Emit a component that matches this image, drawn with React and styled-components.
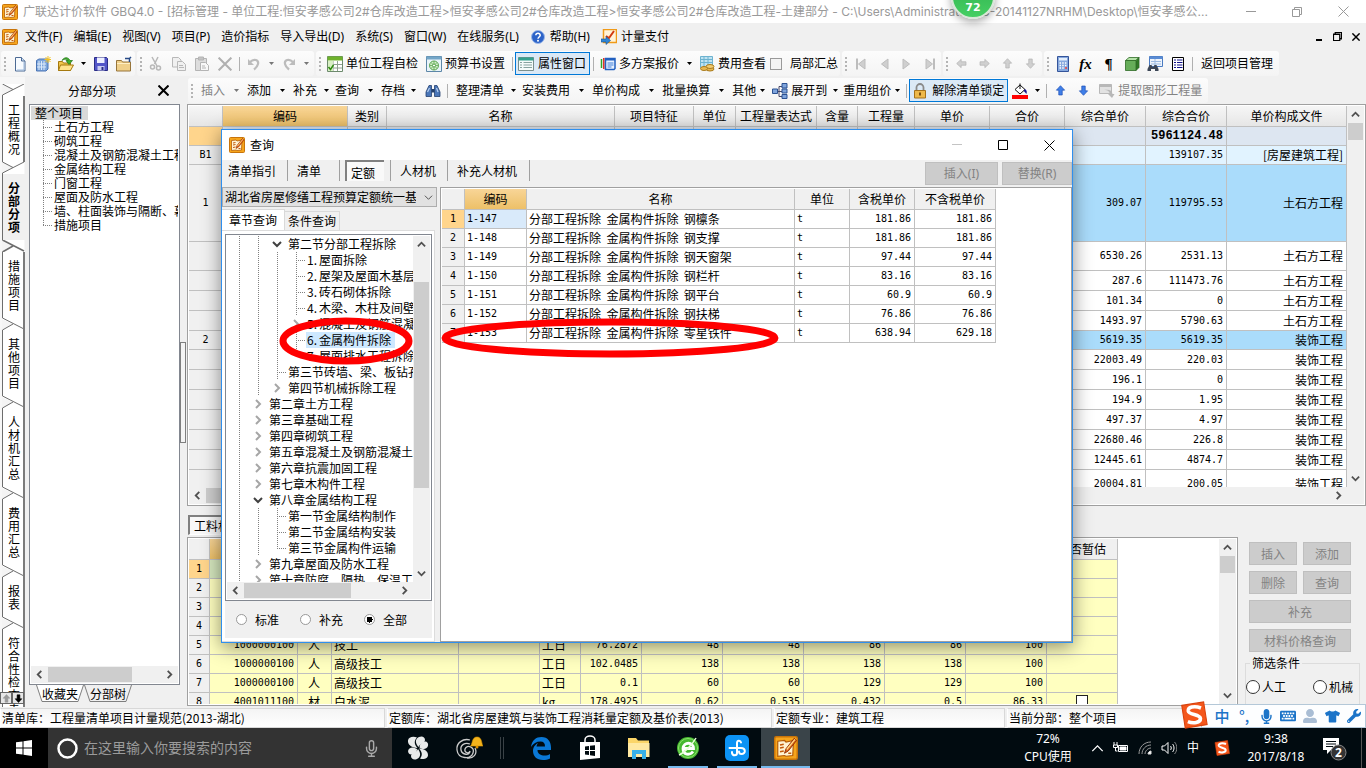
import styled, { createGlobalStyle, css } from "styled-components";
import { FaMicrophone, FaTshirt, FaWrench, FaKeyboard, FaUserAlt } from "react-icons/fa";
import { FiMic } from "react-icons/fi";

const UI = '"Noto Sans", "Noto Sans CJK SC", sans-serif';
const SONG = '"Noto Sans CJK SC", sans-serif';
const MONO = '"DejaVu Sans Mono", "Noto Sans CJK SC", monospace';

const GlobalStyle = createGlobalStyle`
  * { box-sizing: border-box; }
  body {
    margin: 0;
    background: #f0f0f0;
    font: 12px/16px ${SONG};
    color: #000;
    overflow: hidden;
  }
  button, input, select { font: inherit; color: inherit; margin: 0; padding: 0; }
  ul { list-style: none; margin: 0; padding: 0; }
`;

const Screen = styled.div`
  position: relative;
  display: flex;
  flex-direction: column;
  height: 100vh;
  background: #f0f0f0;
  white-space: nowrap;
  overflow: hidden;
`;

/* ---------- title and menu ---------- */

const TitleBar = styled.header`
  display: flex;
  align-items: center;
  flex: none;
  height: 23px;
  padding-left: 2px;
  background: #fff;
  color: #999;
  font-family: Inter, ${UI};
`;

const TitleText = styled.span`
  flex: 1;
  min-width: 0;
  padding-left: 5px;
  overflow: hidden;
`;

const WindowButtons = styled.div`
  display: flex;
  flex: none;
`;

const WindowButton = styled.button`
  display: flex;
  align-items: center;
  justify-content: center;
  width: ${(p) => p.$w || 46}px;
  height: 22px;
  border: none;
  background: none;
`;

const MenuBar = styled.nav`
  display: flex;
  align-items: center;
  flex: none;
  height: 27px;
  padding-left: 2px;
  font-family: ${UI};
`;

const MenuItem = styled.button`
  display: flex;
  align-items: center;
  gap: 4px;
  padding: 0 4px 0 7px;
  border: none;
  background: none;
`;

const Grow = styled.span`
  flex: 1;
`;

/* ---------- tool bars ---------- */

const ToolBar = styled.div`
  display: flex;
  align-items: center;
  flex: none;
  gap: 2px;
  height: 27px;
  padding-left: 1px;
  font-family: ${UI};
`;

const ToolGroup = styled.div`
  display: flex;
  align-items: center;
  flex: none;
  height: 25px;
  padding-right: ${(p) => (p.$end ? 2 : 0)}px;
  border-radius: 3px;
  background: linear-gradient(#fcfcfc, #f4f4f4);
`;

const Grip = styled.span`
  width: 2px;
  height: 14px;
  margin: 0 2px 0 3px;
  background: repeating-linear-gradient(#b4b4b4 0 2px, transparent 2px 4px);
`;

const IconTool = styled.button`
  display: flex;
  align-items: center;
  justify-content: center;
  width: ${(p) => p.$w || 23}px;
  height: 22px;
  border: none;
  background: none;
`;

const Separator = styled.span`
  width: 1px;
  height: 14px;
  margin: 0 2px 0 3px;
  background: #b0b0b0;
`;

const Spacer = styled.span`
  width: 6px;
`;

const TextTool = styled.button`
  border: none;
  background: none;
  padding-right: ${(p) => (p.$flush ? 0 : 4)}px;
  color: ${(p) => (p.$off ? "#838383" : "#000")};
`;

const BoxedTool = styled.button`
  display: flex;
  align-items: center;
  gap: 4px;
  height: 23px;
  padding: 0 3px 0 2px;
  border: 1px solid #0078d7;
  background: #dbe9f6;
`;

const CheckTool = styled.label`
  display: flex;
  align-items: center;
  gap: 8px;
`;

const SquareCheck = styled.input`
  appearance: none;
  width: 12px;
  height: 12px;
  border: 1px solid ${(p) => (p.$dark ? "#222" : "#9a9a9a")};
  background: ${(p) => (p.$dark ? "#fff" : "#f4f4f4")};
`;

const FxText = styled.span`
  font: italic 700 15px/16px "Liberation Serif", serif;
`;

const Pilcrow = styled.span`
  font: 700 15px/16px "Liberation Serif", serif;
`;

/* ---------- body ---------- */

const Body = styled.div`
  display: flex;
  flex: 1;
  min-height: 0;
`;

const SideTabs = styled.div`
  position: relative;
  display: flex;
  flex-direction: column;
  flex: none;
  width: 25px;
  padding-top: 7px;
  background: #f7f7f7;
  overflow: hidden;
`;

const SideTab = styled.button`
  display: block;
  flex: none;
  padding: 7px 4px 7px 5px;
  margin-left: 2px;
  border: solid #6d6d6d;
  border-width: 0 2px 0 1px;
  border-right-color: ${(p) => (p.$active ? "#f0f0f0" : "#7b7b7b")};
  background: ${(p) => (p.$active ? "#f0f0f0" : "#fff")};
  font-weight: ${(p) => (p.$active ? 700 : 400)};
  line-height: 13px;
  white-space: normal;
  word-break: break-all;
`;

const SideLabel = styled.span`
  display: block;
  width: 12px;
`;

const NotchSvg = styled.svg`
  flex: none;
`;

const SideArrows = styled.div`
  position: absolute;
  left: 0;
  bottom: 3px;
  display: flex;
`;

const SideArrow = styled.button`
  display: flex;
  align-items: center;
  justify-content: center;
  width: 12px;
  height: 12px;
  border: 1px solid #666;
  background: #e6e6e6;
`;

const LeftPanel = styled.aside`
  display: flex;
  flex-direction: column;
  flex: none;
  width: 155px;
  padding-left: 4px;
`;

const LeftHeader = styled.div`
  display: flex;
  align-items: center;
  flex: none;
  height: 27px;
  padding-left: 39px;
  justify-content: space-between;
`;

const TreeBox = styled.div`
  display: flex;
  flex-direction: column;
  flex: 1;
  min-height: 0;
  border: 1px solid #828790;
  padding: 1px;
  background: #fff;
`;

const TreeList = styled.ul`
  flex: 1;
  min-width: 0;
  min-height: 0;
  overflow: hidden;
  padding-left: ${(p) => p.$indent || 0}px;
`;

const TreeRow = styled.li`
  display: flex;
  align-items: center;
  height: ${(p) => p.$h}px;
  line-height: ${(p) => p.$h}px;
`;

const TreeRoot = styled.span`
  padding: 0 5px 0 4px;
  background: #d9d9d9;
`;

const TreeText = styled.span`
  padding: 0 4px 0 1px;
  background: ${(p) => (p.$selected ? "#cde8ff" : "none")};
`;

const TreeNo = styled.span`
  display: inline-block;
  width: 12px;
`;

const dotsDown = "repeating-linear-gradient(#808080 0 1px, transparent 1px 2px)";
const dotsAcross = "repeating-linear-gradient(90deg, #808080 0 1px, transparent 1px 2px)";

const Guide = styled.span`
  flex: none;
  width: 19px;
  height: 100%;
  background: ${dotsDown} 0 0 / 1px 100% no-repeat;
`;

const Elbow = styled.span`
  flex: none;
  width: 10px;
  height: 100%;
  margin-left: ${(p) => p.$offset || 0}px;
  background:
    ${dotsDown} 0 0 / 1px ${(p) => (p.$last ? "50%" : "100%")} no-repeat,
    ${dotsAcross} 0 50% / 9px 1px no-repeat;
`;

const Expander = styled.span`
  display: flex;
  flex: none;
  width: 15px;
  margin-left: -5px;
`;

const BottomTabs = styled.div`
  display: flex;
  flex: none;
  height: 22px;
  padding-left: 7px;
`;

const BottomTabButton = styled.button`
  display: grid;
  width: 48px;
  height: 17px;
  border: none;
  background: none;
  line-height: 17px;

  > * { grid-area: 1 / 1; }
`;

const Splitter = styled.div`
  display: flex;
  flex: none;
  align-items: center;
  width: 7px;
`;

const SplitHandle = styled.span`
  width: 6px;
  height: 101px;
  border: 1px solid #7f7f7f;
  background: #f4f4f4;
`;

const Main = styled.main`
  display: flex;
  flex-direction: column;
  flex: 1;
  min-width: 0;
`;

const GridBox = styled.section`
  display: flex;
  flex: ${(p) => (p.$fill ? 1 : "none")};
  flex-direction: ${(p) => (p.$column ? "column" : "row")};
  min-height: 0;
  min-width: 0;
  border: 1px solid #a0a0a0;
  padding: 1px;
  background: #fff;
`;

const GridRow = styled.div`
  display: flex;
  flex: 1;
  min-height: 0;
`;

const GridView = styled.div`
  flex: 1;
  min-width: 0;
  overflow: hidden;
`;

const Table = styled.table`
  table-layout: fixed;
  width: ${(p) => p.$width || "100%"};
  border-spacing: 0;
  border-collapse: separate;
  line-height: 14px;
`;

const line = css`
  border: solid #c0c0c0;
  border-width: 0 1px 1px 0;
`;

const Th = styled.th`
  ${line}
  height: 21px;
  padding: 0;
  font-weight: 400;
  overflow: hidden;
  background: ${(p) =>
    p.$hot
      ? "linear-gradient(#f8d597, #edc068)"
      : p.$shade
      ? "linear-gradient(#f6f6f6, #e6e6e6)"
      : "#f0f0f0"};
`;

const RowHead = styled.th`
  ${line}
  padding: 0;
  font: 10px/14px ${MONO};
  background: ${(p) => (p.$hot ? "#ffd58c" : "#f0f0f0")};
`;

const Td = styled.td`
  ${line}
  height: ${(p) => p.$h || 19}px;
  padding: 0 3px 0 2px;
  overflow: hidden;
  text-align: ${(p) => p.$align || "left"};
  background: ${(p) => p.$bg || "#fff"};
  ${(p) => p.$num && `font: 10px/14px ${MONO};`}
  ${(p) => p.$strong && `font: 700 12px/14px "Liberation Mono", monospace;`}
`;

const VScroll = styled.div`
  display: flex;
  flex-direction: column;
  align-items: center;
  flex: none;
  width: 17px;
  background: #f0f0f0;
`;

const HScroll = styled.div`
  display: flex;
  align-items: center;
  flex: none;
  height: 17px;
  padding-right: ${(p) => p.$corner || 0}px;
  background: #f0f0f0;
`;

const ScrollEnd = styled.button`
  display: flex;
  align-items: center;
  justify-content: center;
  width: 17px;
  height: 17px;
  border: none;
  background: none;
`;

const Thumb = styled.span`
  width: ${(p) => (p.$across ? `${p.$size}px` : "15px")};
  height: ${(p) => (p.$across ? "15px" : `${p.$size}px`)};
  margin-top: ${(p) => p.$offset || 0}px;
  background: #cdcdcd;
`;

const DetailTabs = styled.div`
  flex: none;
  height: 31px;
  padding: 9px 1px 0;
`;

const SunkenTab = styled.button`
  height: 20px;
  padding: 0 6px 0 4px;
  border: solid #808080;
  border-width: 2px 1px 1px 2px;
  border-right-color: #fff;
  border-bottom-color: #fff;
  background: #f8f8f8;
  line-height: 16px;
`;

const Lower = styled.div`
  display: flex;
  flex: none;
  height: 170px;
  padding-bottom: 1px;
`;

const ActionPanel = styled.div`
  flex: none;
  width: 128px;
  padding: 5px 6px 0 7px;
  overflow: hidden;
`;

const ActionGrid = styled.div`
  display: grid;
  grid-template-columns: 48px 48px;
  gap: 6px;
  padding-left: 4px;
`;

const FlatButton = styled.button`
  height: 23px;
  width: ${(p) => p.$w || "auto"};
  grid-column: ${(p) => (p.$wide ? "1 / 3" : "auto")};
  border: 1px solid #bfbfbf;
  background: #ccc;
  color: #838383;
  line-height: 16px;
`;

const FilterBox = styled.fieldset`
  margin: 3px 0 0;
  padding: 0;
  min-width: 0;
  height: 70px;
  border: 1px solid #dcdcdc;
`;

const FilterLegend = styled.legend`
  margin-left: 4px;
  padding: 0 2px;
`;

const FilterRow = styled.div`
  display: flex;
  justify-content: space-between;
  height: 20px;
  padding: 0 6px 0 0;
  margin: 6px 0 4px;
`;

const RadioLabel = styled.label`
  display: flex;
  align-items: center;
  gap: ${(p) => p.$gap || 2}px;
`;

const Radio = styled.input`
  appearance: none;
  width: ${(p) => p.$size}px;
  height: ${(p) => p.$size}px;
  border: 1px solid ${(p) => (p.$size > 12 ? "#333" : "#999")};
  border-radius: 50%;
  background: #fff;

  &:checked {
    background: radial-gradient(circle, #000 0 3px, #fff 3px);
  }
`;

/* ---------- status bar and task bar ---------- */

const StatusBar = styled.footer`
  display: grid;
  grid-template-columns: 385px 385px 231px 1fr;
  gap: 2px;
  flex: none;
  height: 21px;
  padding: 1px 0;
  background: #f0f0f0;
`;

const StatusCell = styled.span`
  padding-left: 1px;
  border: 1px solid #d8d8d8;
  border-left-color: #fff;
  background: linear-gradient(#f4f4f4, #fff);
  line-height: 18px;
`;

const TaskBar = styled.div`
  display: flex;
  flex: none;
  height: 40px;
  background: #010b10;
  color: #fff;
  font-family: ${UI};
`;

const StartButton = styled.button`
  display: flex;
  align-items: center;
  justify-content: center;
  width: 48px;
  border: none;
  background: #000;
`;

const SearchBox = styled.label`
  display: flex;
  align-items: center;
  width: 344px;
  padding: 0 12px 0 8px;
  gap: 5px;
  background: #333;
`;

const SearchInput = styled.input`
  flex: 1;
  min-width: 0;
  border: none;
  background: none;
  font-size: 14px;

  &::placeholder { color: #9b9b9b; }
`;

const TaskButton = styled.button`
  display: flex;
  align-items: center;
  justify-content: center;
  width: ${(p) => p.$w || 49}px;
  border: none;
  background: ${(p) => (p.$active ? "#3a4449" : "none")};
  ${(p) =>
    p.$open &&
    `background-image: linear-gradient(#76b9ed, #76b9ed);
     background-size: ${p.$active ? "100%" : "40px"} 2px;
     background-position: center bottom;
     background-repeat: no-repeat;`}
`;

const TaskDivider = styled.span`
  align-self: center;
  width: 4px;
  height: 22px;
  margin: 0 12px 0 6px;
  border: solid #3a4246;
  border-width: 0 1px;
`;

const Clock = styled.div`
  width: 74px;
  padding-top: 2px;
  line-height: 18px;
  text-align: center;
`;

const TaskEdge = styled.span`
  width: 11px;
  background: linear-gradient(#555, #555) 6px 0 / 1px 100% no-repeat;
`;

const ImeBar = styled.div`
  position: absolute;
  right: 0;
  bottom: 40px;
  display: flex;
  align-items: center;
  height: 24px;
  padding-left: 9px;
  border: 1px solid #b4c8d8;
  background: #fdfeff;
  color: #1c74c8;
`;

const ImeLogo = styled.span`
  position: absolute;
  left: -22px;
  top: -4px;
  display: flex;
`;

const ImeButton = styled.button`
  display: flex;
  align-items: center;
  justify-content: center;
  width: 22px;
  border: none;
  background: none;
  font-size: 15px;
  font-weight: 500;
  color: ${(p) => (p.$pale ? "#a9bdd4" : "#1c74c8")};
`;

const SpeedBall = styled.div`
  position: absolute;
  top: -25px;
  left: 951px;
  width: 44px;
  height: 44px;
  padding-top: 23px;
  border: 2px solid #d8e6d8;
  border-radius: 50%;
  background: linear-gradient(#2fae4b, #45cf63);
  box-shadow: 0 3px 8px rgba(0, 0, 0, 0.35);
  color: #fff;
  font: 700 11px/16px "DejaVu Sans", sans-serif;
  text-align: center;
`;

/* ---------- query dialog ---------- */

const Dialog = styled.section`
  position: absolute;
  left: 221px;
  top: 129px;
  display: flex;
  flex-direction: column;
  width: 852px;
  height: 514px;
  border: 1px solid #2f8fee;
  background: #f0f0f0;
  box-shadow: 0 4px 18px rgba(0, 0, 0, 0.45);
`;

const DialogTitle = styled.div`
  display: flex;
  align-items: center;
  gap: 5px;
  flex: none;
  height: 30px;
  padding-left: 7px;
  background: #fff;
`;

const DialogTabs = styled.div`
  display: flex;
  align-items: center;
  flex: none;
  height: 27px;
`;

const DialogTab = styled.button`
  width: ${(p) => p.$w}px;
  height: 21px;
  margin-bottom: 6px;
  padding: 0 0 0 ${(p) => (p.$first ? 6 : 9)}px;
  border: solid #a0a0a0;
  border-width: 0 1px 0 ${(p) => (p.$edge ? 1 : 0)}px;
  background: none;
  line-height: 16px;
  text-align: left;
`;

const ActiveDialogTab = styled.button`
  height: 21px;
  margin: 0 6px 6px 5px;
  padding: 2px 9px 0 4px;
  border: solid #808080;
  border-width: 2px 0 0 2px;
  background: #f9f9f9;
  line-height: 16px;
`;

const DialogActions = styled.div`
  display: flex;
  gap: 4px;
  margin-left: auto;
  font-family: ${UI};
`;

const DialogBody = styled.div`
  display: flex;
  flex: 1;
  min-height: 0;
`;

const QueryPane = styled.div`
  display: flex;
  flex-direction: column;
  flex: none;
  width: 218px;
`;

const ComboWrap = styled.div`
  display: grid;
  align-items: center;
  flex: none;
  width: 215px;
  height: 20px;

  > * { grid-area: 1 / 1; }
  > svg { justify-self: end; margin-right: 4px; pointer-events: none; }
`;

const Combo = styled.select`
  appearance: none;
  width: 100%;
  height: 20px;
  padding: 0 20px 0 2px;
  border: 1px solid #adadad;
  border-radius: 0;
  background: #e1e1e1;
  line-height: 16px;
`;

const PageTabs = styled.div`
  display: flex;
  align-items: flex-end;
  flex: none;
  height: 23px;
`;

const PageTab = styled.button`
  height: ${(p) => (p.$active ? 21 : 19)}px;
  padding: 0 ${(p) => (p.$active ? 7 : 3)}px;
  border: solid #d9d9d9;
  border-width: 1px 1px 0 0;
  background: ${(p) => (p.$active ? "#fff" : "#f0f0f0")};
  line-height: 16px;
`;

const Page = styled.div`
  display: flex;
  flex-direction: column;
  flex: 1;
  min-height: 0;
  width: 213px;
  padding: 3px 2px 3px 3px;
  border: solid #dcdcdc;
  border-width: 1px 1px 1px 0;
  background: #fff;
`;

const RadioStrip = styled.div`
  display: flex;
  align-items: center;
  flex: none;
  height: 37px;
  padding-left: 11px;
  gap: 21px;
  background: #f0f0f0;
`;

const Mark = styled.svg`
  position: absolute;
  left: ${(p) => p.$x}px;
  top: ${(p) => p.$y}px;
  pointer-events: none;
`;

/* ---------- drawings ---------- */

const Svg = ({ size = 16, children, ...rest }) => (
  <svg width={size} height={size} viewBox="0 0 16 16" fill="none" {...rest}>
    {children}
  </svg>
);

const AppIcon = ({ size = 16 }) => (
  <Svg size={size}>
    <rect x=".5" y=".5" width="15" height="15" rx="1" fill="#f6a51c" stroke="#c8740a" />
    <path d="M2.500 3.500 7 3l1 1 5-1-.5 10-4.500.5-1-.5-4.500.5Z" fill="#fff3d2" stroke="#b45c08" strokeWidth=".8" />
    <path d="M4 6 6.500 5.500M4 8l2.500-.5M4 10.500 6.500 10M9.500 11.500h2" stroke="#c4590a" />
    <path d="M13.500 1.500 8 8.500l-1 3 2.500-1.500L15 3Z" fill="#e0641a" stroke="#8e2c05" strokeWidth=".6" />
    <path d="M8.500 9 14 2.200" stroke="#ffe08a" strokeWidth=".8" />
  </Svg>
);

const Triangle = ({ color = "#000" }) => (
  <svg width="5" height="3" viewBox="0 0 5 3">
    <path d="M0 0h5L2.500 3Z" fill={color} />
  </svg>
);

const turns = { down: 0, left: 90, up: 180, right: 270 };
const Chevron = ({ dir, size = 9, color = "#505050", width = 2 }) => (
  <svg width={size} height={size} viewBox="0 0 10 10" fill="none">
    <path d="M1 3l4 4 4-4" stroke={color} strokeWidth={width} transform={`rotate(${turns[dir]} 5 5)`} />
  </svg>
);

const CloseX = ({ size = 11, color = "#000", width = 1 }) => (
  <svg width={size} height={size} viewBox="0 0 11 11">
    <path d="M.5.5l10 10M10.500.5l-10 10" stroke={color} strokeWidth={width} />
  </svg>
);

const Dash = ({ color }) => (
  <svg width="10" height="10" viewBox="0 0 10 10">
    <path d="M0 4.500h10" stroke={color} />
  </svg>
);

const Restore = ({ color, width = 1, size = 10 }) => (
  <svg width={size} height={size} viewBox="0 0 10 10" fill="none" stroke={color} strokeWidth={width}>
    <path d="M.5 2.500h7v7h-7Z M2.500 2.500v-2h7v7h-2" />
  </svg>
);

const Arrow4 = ({ dir, fill = "#d0d0d0", stroke = "#b0b0b0", size = 11 }) => (
  <Svg size={size}>
    <path
      d="M8 15 2 8.500h3.500V1.500h5v7H14Z"
      fill={fill}
      stroke={stroke}
      transform={`rotate(${turns[dir]} 8 8)`}
    />
  </Svg>
);

const NavIcon = ({ back, bar }) => (
  <Svg>
    <g transform={back ? "" : "rotate(180 8 8)"}>
      <path d="M12 3v10L5.500 8Z" fill="#cfcfcf" stroke="#bdbdbd" />
      {bar && <path d="M4 2.500v11" stroke="#bdbdbd" strokeWidth="2" />}
    </g>
  </Svg>
);

const NewIcon = () => (
  <Svg>
    <path d="M3.500 1.500h6l3.500 3.500v10h-9.500Z" fill="#f7fbff" stroke="#4c6a94" />
    <path d="M9.500 1.500V5H13" fill="#cfe0f4" stroke="#4c6a94" />
    <path d="M12 6v8H5" stroke="#9cb9dc" />
  </Svg>
);

const NewProjectIcon = () => (
  <Svg>
    <path d="M1.500 4.500 4 3h9v10l-2 2H1.500Z" fill="#7ea6dc" stroke="#4a74b4" />
    <path d="M4 5v9M6.500 5v9M9 5v9M2 8h9M2 11h9" stroke="#dceafa" />
    <path d="M13 0v7M9.500 3.500h7M10.500 1l5 5M15.500 1l-5 5" stroke="#f2c122" />
  </Svg>
);

const OpenIcon = () => (
  <Svg>
    <path d="M.5 5.500h4l1 1.500h7v7.500H.5Z" fill="#f1c64a" stroke="#a5790f" />
    <path d="M2.500 9h13l-3 5.500H.5Z" fill="#ffe38b" stroke="#a5790f" />
    <path d="M4 4.500C6 1 10 .5 12 4.500h2.500L11 8.500 8 4.500h2C8.500 2.500 6 3 4 4.500Z" fill="#3fae2a" stroke="#1d7413" strokeWidth=".7" />
  </Svg>
);

const SaveIcon = () => (
  <Svg>
    <path d="M1.500 1.500h12l1 1v12h-13Z" fill="#5356c8" stroke="#2a2c86" />
    <path d="M4 1.500h7.500V7H4Z" fill="#eef0ff" />
    <path d="M4.500 10h7v4.500h-7Z" fill="#c9ccf2" />
    <path d="M8.500 11h2v3h-2Z" fill="#2a2c86" />
  </Svg>
);

const FolderIcon = () => (
  <Svg>
    <path d="M.5 4.500h5l1 1.500h8v9H.5Z" fill="#f0d08a" stroke="#97753a" />
    <path d="M1 7.500h13" stroke="#fff0c4" />
    <path d="M9 2.500h4.500V6M13.500 2.500 15 1" stroke="#274a86" strokeWidth="1.500" />
  </Svg>
);

const CutIcon = () => (
  <Svg stroke="#b8b8b8" strokeWidth="1.500">
    <path d="M4 1l5 9M10 1 6.500 8" />
    <circle cx="10.500" cy="12" r="2" />
    <circle cx="4.500" cy="11" r="2" />
  </Svg>
);

const CopyIcon = () => (
  <Svg stroke="#b8b8b8" fill="#f0f0f0">
    <path d="M1.500 1.500h6l2.500 2.500v7H1.500Z" />
    <path d="M6.500 5.500h5l3 3v6h-8Z" />
    <path d="M8 9.500h4M8 11.500h5" />
  </Svg>
);

const PasteIcon = () => (
  <Svg stroke="#b4b4b4" fill="#ddd">
    <path d="M1.500 2.500h11v12h-11Z" />
    <path d="M4.500 1h5v3h-5Z" fill="#c4c4c4" />
    <path d="M6.500 6.500h5l3 3v5h-8Z" fill="#f8f8f8" />
    <path d="M8 10h3M8 12h4" />
  </Svg>
);

const UndoIcon = ({ flip }) => (
  <Svg>
    <g transform={flip ? "translate(16 0) scale(-1 1)" : ""}>
      <path d="M4 6c4-4 9-2 8 2-.5 2.500-2 4-4 5.500" stroke="#bcbcbc" strokeWidth="2.200" />
      <path d="M2 3v6h6Z" fill="#bcbcbc" />
    </g>
  </Svg>
);

const CheckTableIcon = () => (
  <Svg>
    <path d="M.5.5h15v15H.5Z" fill="#fff" stroke="#6d8a6d" />
    <path d="M.5.5h15v4H.5Z" fill="#6fb22c" />
    <path d="M1 8.500h14M1 12h14M6 5v10M10.500 5v10" stroke="#90a090" />
    <path d="M1 5h5v10H1Z" fill="#d8efc4" />
    <path d="M1.500 11l2 2.500L6.500 9" stroke="#2f8a10" strokeWidth="1.500" />
  </Svg>
);

const GearPageIcon = () => (
  <Svg>
    <path d="M.5.5h15v15H.5Z" fill="#e9f4f9" stroke="#5d87a8" />
    <path d="M.5.5h15v3H.5Z" fill="#74a6c8" />
    <circle cx="8" cy="9.500" r="4.500" fill="#d2efc9" stroke="#5aa551" />
    <path d="M8 5v9M3.500 9.500h9M5 6.500l6 6M11 6.500l-6 6" stroke="#5aa551" strokeWidth=".8" />
    <circle cx="8" cy="9.500" r="1.500" fill="#fff" stroke="#5aa551" />
  </Svg>
);

const WindowIcon = () => (
  <Svg>
    <path d="M.5 1.500h15v13H.5Z" fill="#f4fbfa" stroke="#7b8f8d" />
    <path d="M.5 1.500h15v3H.5Z" fill="#35a18f" />
    <path d="M2 6.500h2M2 9h2M2 11.500h2M5.500 6.500h8.500M5.500 9h8.500M5.500 11.500h8.500" stroke="#87a3a0" />
  </Svg>
);

const PlansIcon = () => (
  <Svg>
    <path d="M1.500 3v9" stroke="#2ea32a" strokeWidth="1.500" />
    <path d="M3.800 2v11" stroke="#e02a1e" strokeWidth="1.500" />
    <path d="M5.500 2.500h9.500v10l-1 1H5.500Z" fill="#e8f2ff" stroke="#2260c0" strokeWidth="1.500" />
    <path d="M5.500 3.500h9.500" stroke="#2260c0" strokeWidth="2" />
    <path d="M7.500 7h6M7.500 9h6M7.500 11h4" stroke="#3f7fd8" />
  </Svg>
);

const CostIcon = () => (
  <Svg>
    <path d="M1.500.5h12v11h-12Z" fill="#bfe3f2" stroke="#6db3d0" />
    <path d="M2 3.500h11M2 6.500h11M5 1v10M9 1v10" stroke="#6db3d0" />
    <ellipse cx="11" cy="13" rx="4" ry="2" fill="#e8b850" stroke="#a97b1d" />
    <ellipse cx="11" cy="10.500" rx="4" ry="2" fill="#f2cd73" stroke="#a97b1d" />
    <ellipse cx="5" cy="12.500" rx="3.500" ry="2" fill="#e8b850" stroke="#a97b1d" />
  </Svg>
);

const CalcIcon = () => (
  <Svg>
    <path d="M2.500.5h11v15h-11Z" fill="#86a8de" stroke="#34549a" />
    <path d="M4 2h8v2.500H4Z" fill="#e3eefc" />
    <path d="M4.500 7h7M4.500 9.500h7M4.500 12h7" stroke="#fff" strokeWidth="1.500" strokeDasharray="1.500 1.200" />
    <path d="M10 12h2" stroke="#d33" strokeWidth="1.500" />
  </Svg>
);

const CubeIcon = () => (
  <Svg>
    <path d="M1.500 4.500 5 1.500h10l-3 3Z" fill="#b4e2a8" stroke="#2e6b26" strokeWidth=".8" />
    <path d="M12 4.500l3-3v10l-3 3Z" fill="#2f7a25" stroke="#2e6b26" strokeWidth=".8" />
    <path d="M1.500 4.500H12v10H1.500Z" fill="#66ad59" stroke="#2e6b26" strokeWidth=".8" />
  </Svg>
);

const FindTableIcon = () => (
  <Svg>
    <path d="M2.500.5h13v10h-13Z" fill="#eef4fc" stroke="#4a7ac0" />
    <path d="M2.500.5h13V3h-13Z" fill="#5a8cd4" />
    <path d="M4 5.500h10M4 8h10M8 3v7" stroke="#9dbbe2" />
    <path d="M.5 15v-2l2-4h2l1 2h1l1-2h2l2 4v2H8v-2H4v2Z" fill="#3c4656" />
  </Svg>
);

const ListIcon = () => (
  <Svg>
    <path d="M2.500 1.500h11v13h-11Z" fill="#fff" stroke="#000" />
    <path d="M4 4h2M4 6.500h2M4 9h2M4 11.500h2M7 4h5.500M7 6.500h5.500M7 9h5.500M7 11.500h5.500" stroke="#14148c" />
  </Svg>
);

const BinocularsIcon = () => (
  <Svg>
    <path d="M1 13.500V9L4 2.500h2.500v11Z" fill="#4a76b8" stroke="#23406e" strokeWidth=".8" />
    <path d="M15 13.500V9L12 2.500H9.500v11Z" fill="#4a76b8" stroke="#23406e" strokeWidth=".8" />
    <path d="M6.500 6h3v3.500h-3Z" fill="#23406e" />
    <path d="M2.500 9 4.500 5M13 9l-1.500-4" stroke="#b8d0f0" strokeWidth="1.200" />
  </Svg>
);

const ExpandIcon = () => (
  <Svg>
    <path d="M4 8.500h6M7 13.500h3M7 3.500h3M7 3.500v10" stroke="#446" />
    <path d="M.5 6h5v4.500h-5ZM10 .5h5V5h-5ZM10 6h5v4h-5ZM10 11.500h5v4h-5Z" fill="#7fa4dc" stroke="#2c5292" />
  </Svg>
);

const LockIcon = () => (
  <Svg>
    <path d="M4.500 8V4.500a3.500 3.500 0 0 1 7 0V8" stroke="#8a8a8a" strokeWidth="1.800" />
    <path d="M2.500 7.500h11v7.500h-11Z" fill="#eeb94a" stroke="#a5721a" />
    <path d="M8 9.500v3" stroke="#6b430a" strokeWidth="1.800" />
  </Svg>
);

const BucketIcon = () => (
  <Svg>
    <path d="M3 6.500 8 2l5 4.500-5 4.500Z" fill="#fff" stroke="#111" />
    <path d="M8 6V.5" stroke="#111" />
    <path d="M13 6c2 1 2 3 1.500 5-1-1-2-2.500-3-3Z" fill="#14148c" />
    <path d="M0 12h16v4H0Z" fill="#f00" />
  </Svg>
);

const ExtractIcon = () => (
  <Svg>
    <path d="M.5 1.500h12v9H.5Z" fill="#e2e2e2" stroke="#b8b8b8" />
    <path d="M.5 1.500h12V4H.5Z" fill="#b8b8b8" />
    <path d="M5 7c4 0 5 1 6 4h-2l4 4 2.500-4h-2C13 7 10 6 5 7Z" fill="#b8b8b8" />
  </Svg>
);

const HelpIcon = () => (
  <Svg>
    <circle cx="8" cy="8" r="6.500" fill="#2c63c8" stroke="#9bb8ea" />
    <path d="M5.800 6.300C6 3.500 10.300 3.700 10.200 6.300 10 8 8 8 8 9.800" stroke="#fff" strokeWidth="1.500" />
    <circle cx="8" cy="11.800" r="1" fill="#fff" />
  </Svg>
);

const PayIcon = () => (
  <Svg>
    <path d="M2.500.5h13v13h-13Z" fill="#fff3d8" stroke="#f09a18" strokeWidth="1.500" />
    <path d="M5 7l3 2 5-7" stroke="#d23a10" strokeWidth="2" />
    <path d="M0 10h5V7.500l4.500 4L5 15.500V13H0Z" fill="#2f86d6" stroke="#174f8c" strokeWidth=".6" />
  </Svg>
);

const SogouIcon = ({ size = 16 }) => (
  <Svg size={size}>
    <path d="M1 2.500 13.500.5l2 13L3 15.500Z" fill="#f4571c" stroke="#d9410b" strokeWidth=".6" />
    <path d="M12 4C8 2.500 4.500 3.500 4.700 5.700 5 8 11.500 7.500 11.700 10 11.800 12.500 7.500 13 4.500 11.800" stroke="#fff" strokeWidth="2" />
  </Svg>
);

/* slanted edge between two side tabs; `lower` draws the lower tab in front */
const Notch = ({ lower, heavy }) => (
  <NotchSvg width="25" height="12" viewBox="0 0 25 12" fill="none">
    <path d="M2 0h22v12H2Z" fill="#fff" />
    <path d={lower ? "M2 0 13 5.500 2 11Z" : "M2 1 13 6.500 2 12Z"} fill="#f4f4f4" />
    {lower ? (
      <path d="M2.500 0 13 5.500M24 0 2.500 11v1" stroke="#6d6d6d" />
    ) : (
      <path d="M2.500 0 24 11M13 6 2.500 12" stroke="#6d6d6d" strokeWidth={heavy ? 1.6 : 1} />
    )}
    {!heavy && !lower && <path d="M24 0v12" stroke="#7b7b7b" strokeWidth="2" />}
  </NotchSvg>
);

const BottomTab = ({ children, front }) => (
  <BottomTabButton>
    <svg width="48" height="17" viewBox="0 0 48 17">
      <path d="M.5 0 6 16.500h36L47.500 0" fill={front ? "#fff" : "#f0f0f0"} stroke="#7f7f7f" />
    </svg>
    <span>{children}</span>
  </BottomTabButton>
);

/* ---------- data ---------- */

const menus = ["文件(F)", "编辑(E)", "视图(V)", "项目(P)", "造价指标", "导入导出(D)", "系统(S)", "窗口(W)", "在线服务(L)"];

const sideTabs = ["工程概况", "分部分项", "措施项目", "其他项目", "人材机汇总", "费用汇总", "报表", "符合性检查表"];

const projectTree = [
  "土石方工程",
  "砌筑工程",
  "混凝土及钢筋混凝土工程",
  "金属结构工程",
  "门窗工程",
  "屋面及防水工程",
  "墙、柱面装饰与隔断、幕墙工程",
  "措施项目",
];

const mainCols = [34, 125, 39, null, 79, 42, 81, 41, 57, 75, 75, 81, 81, 120];
const mainHeads = ["", "编码", "类别", "名称", "项目特征", "单位", "工程量表达式", "含量", "工程量", "单价", "合价", "综合单价", "综合合价", "单价构成文件"];
const mainRows = [
  { h: 19, bg: "#dde6f1", hot: true, total: "5961124.48", strong: true },
  { h: 19, bg: "#e1f3ff", no: "B1", total: "139107.35", file: "[房屋建筑工程]" },
  { h: 77, bg: "#aadcfb", no: "1", price: "309.07", total: "119795.53", file: "土石方工程" },
  { h: 29, price: "6530.26", total: "2531.13", file: "土石方工程" },
  { h: 20, price: "287.6", total: "111473.76", file: "土石方工程" },
  { h: 20, price: "101.34", total: "0", file: "土石方工程" },
  { h: 20, price: "1493.97", total: "5790.63", file: "土石方工程" },
  { h: 19, bg: "#aadcfb", no: "2", price: "5619.35", total: "5619.35", file: "装饰工程" },
  { h: 20, price: "22003.49", total: "220.03", file: "装饰工程" },
  { h: 20, price: "196.1", total: "0", file: "装饰工程" },
  { h: 20, price: "194.9", total: "1.95", file: "装饰工程" },
  { h: 20, price: "497.37", total: "4.97", file: "装饰工程" },
  { h: 20, price: "22680.46", total: "226.8", file: "装饰工程" },
  { h: 20, price: "12445.61", total: "4874.7", file: "装饰工程" },
  { h: 29, price: "20004.81", total: "200.05", file: "装饰工程" },
];

const lowerCols = [21, 88, 34, 127, 81, 41, 61, 81, 81, 81, 81, 81, 71];
const lowerRows = [
  [],
  [],
  [],
  [],
  ["1000000100", "人", "技工", "", "工日", "76.2872", "48", "48", "86", "86", "100"],
  ["1000000100", "人", "高级技工", "", "工日", "102.0485", "138", "138", "138", "138", "100"],
  ["1000000100", "人", "高级技工", "", "工日", "0.1", "60", "60", "129", "129", "100"],
  ["4001011100", "材", "白水泥", "", "kg", "178.4925", "0.62", "0.535", "0.432", "0.5", "86.33"],
];

const quotaRows = [
  ["1-147", "钢檩条", "181.86", "181.86"],
  ["1-148", "钢支撑", "181.86", "181.86"],
  ["1-149", "钢天窗架", "97.44", "97.44"],
  ["1-150", "钢栏杆", "83.16", "83.16"],
  ["1-151", "钢平台", "60.9", "60.9"],
  ["1-152", "钢扶梯", "76.86", "76.86"],
  ["1-153", "零星铁件", "638.94", "629.18"],
];

// level, kind (open / closed branch, leaf, last leaf), text, number
const chapters = [
  [2, "open", "第二节分部工程拆除"],
  [3, "leaf", "屋面拆除", "1."],
  [3, "leaf", "屋架及屋面木基层拆除", "2."],
  [3, "leaf", "砖石砌体拆除", "3."],
  [3, "leaf", "木梁、木柱及间壁拆除", "4."],
  [3, "closed", "混凝土及钢筋混凝土拆除", "5."],
  [3, "leaf", "金属构件拆除", "6."],
  [3, "last", "屋面排水工程拆除", "7."],
  [2, "leaf", "第三节砖墙、梁、板钻孔"],
  [2, "closed", "第四节机械拆除工程"],
  [1, "closed", "第二章土方工程"],
  [1, "closed", "第三章基础工程"],
  [1, "closed", "第四章砌筑工程"],
  [1, "closed", "第五章混凝土及钢筋混凝土"],
  [1, "closed", "第六章抗震加固工程"],
  [1, "closed", "第七章木构件工程"],
  [1, "open", "第八章金属结构工程"],
  [2, "leaf", "第一节金属结构制作"],
  [2, "leaf", "第二节金属结构安装"],
  [2, "last", "第三节金属构件运输"],
  [1, "closed", "第九章屋面及防水工程"],
  [1, "closed", "第十章防腐、隔热、保温工程"],
];

/* ---------- parts ---------- */

const Cols = ({ widths }) => (
  <colgroup>
    {widths.map((w, i) => (
      <col key={i} style={w ? { width: w } : undefined} />
    ))}
  </colgroup>
);

const Drop = ({ w = 12, off }) => (
  <IconTool $w={w} aria-label="更多">
    <Triangle color={off ? "#777" : "#000"} />
  </IconTool>
);

const DropTool = ({ children, w = 22, off }) => (
  <>
    <TextTool $flush $off={off}>{children}</TextTool>
    <Drop w={w} off={off} />
  </>
);

const TopTools = () => (
  <ToolBar>
    <ToolGroup>
      <Grip />
      <IconTool><NewIcon /></IconTool>
      <IconTool><NewProjectIcon /></IconTool>
      <IconTool><OpenIcon /></IconTool>
      <Drop />
      <IconTool><SaveIcon /></IconTool>
      <IconTool><FolderIcon /></IconTool>
    </ToolGroup>
    <ToolGroup $end>
      <Grip />
      <IconTool><CutIcon /></IconTool>
      <IconTool><CopyIcon /></IconTool>
      <IconTool><PasteIcon /></IconTool>
      <IconTool><CloseX size={14} color="#b0b0b0" width={1.6} /></IconTool>
      <Separator />
      <IconTool><UndoIcon /></IconTool>
      <Drop off />
      <IconTool><UndoIcon flip /></IconTool>
      <Drop off />
    </ToolGroup>
    <ToolGroup $end>
      <Grip />
      <IconTool><CheckTableIcon /></IconTool>
      <TextTool>单位工程自检</TextTool>
      <IconTool><GearPageIcon /></IconTool>
      <TextTool>预算书设置</TextTool>
      <Separator />
      <BoxedTool><WindowIcon />属性窗口</BoxedTool>
      <Separator />
      <IconTool><PlansIcon /></IconTool>
      <TextTool>多方案报价</TextTool>
      <Drop />
      <IconTool><CostIcon /></IconTool>
      <TextTool>费用查看</TextTool>
      <CheckTool><SquareCheck type="checkbox" />局部汇总</CheckTool>
    </ToolGroup>
    <ToolGroup>
      <Grip />
      <IconTool><NavIcon back bar /></IconTool>
      <IconTool><NavIcon back /></IconTool>
      <IconTool><NavIcon /></IconTool>
      <IconTool><NavIcon bar /></IconTool>
    </ToolGroup>
    <ToolGroup>
      <Grip />
      <IconTool><Arrow4 dir="left" /></IconTool>
      <IconTool><Arrow4 dir="right" /></IconTool>
      <IconTool><Arrow4 dir="up" /></IconTool>
      <IconTool><Arrow4 dir="down" /></IconTool>
    </ToolGroup>
    <ToolGroup $end>
      <Grip />
      <IconTool><CalcIcon /></IconTool>
      <IconTool><FxText>fx</FxText></IconTool>
      <IconTool><Pilcrow>¶</Pilcrow></IconTool>
      <IconTool><CubeIcon /></IconTool>
      <IconTool><FindTableIcon /></IconTool>
      <IconTool><ListIcon /></IconTool>
      <Separator />
      <Spacer />
      <TextTool>返回项目管理</TextTool>
    </ToolGroup>
  </ToolBar>
);

const ItemTools = () => (
  <ToolBar>
    <ToolGroup $end>
      <Grip />
      <Spacer />
      <DropTool off>插入</DropTool>
      <DropTool>添加</DropTool>
      <DropTool w={18}>补充</DropTool>
      <DropTool>查询</DropTool>
      <DropTool w={16}>存档</DropTool>
      <IconTool><BinocularsIcon /></IconTool>
      <Separator />
      <Spacer />
      <DropTool w={18}>整理清单</DropTool>
      <DropTool>安装费用</DropTool>
      <DropTool>单价构成</DropTool>
      <DropTool>批量换算</DropTool>
      <DropTool w={12}>其他</DropTool>
      <IconTool><ExpandIcon /></IconTool>
      <DropTool w={16}>展开到</DropTool>
      <DropTool w={12}>重用组价</DropTool>
      <Separator />
      <BoxedTool><LockIcon />解除清单锁定</BoxedTool>
      <IconTool><BucketIcon /></IconTool>
      <Drop />
      <Separator />
      <IconTool><Arrow4 dir="up" fill="#3f7fe8" stroke="#1a4cb4" /></IconTool>
      <IconTool><Arrow4 dir="down" fill="#3f7fe8" stroke="#1a4cb4" /></IconTool>
      <IconTool><ExtractIcon /></IconTool>
      <TextTool $off>提取图形工程量</TextTool>
    </ToolGroup>
  </ToolBar>
);

const Scroll = ({ size, offset }) => (
  <VScroll>
    <ScrollEnd aria-label="向上"><Chevron dir="up" /></ScrollEnd>
    <Thumb $size={size} $offset={offset} />
    <Grow />
    <ScrollEnd aria-label="向下"><Chevron dir="down" /></ScrollEnd>
  </VScroll>
);

const AcrossScroll = ({ size, corner }) => (
  <HScroll $corner={corner}>
    <ScrollEnd aria-label="向左"><Chevron dir="left" /></ScrollEnd>
    <Thumb $across $size={size} />
    <Grow />
    <ScrollEnd aria-label="向右"><Chevron dir="right" /></ScrollEnd>
  </HScroll>
);

const MainGrid = () => (
  <GridBox $fill $column>
    <GridRow>
      <GridView>
        <Table>
          <Cols widths={mainCols} />
          <thead>
            <tr>
              {mainHeads.map((t, i) => (
                <Th key={i} $shade $hot={i === 1}>{t}</Th>
              ))}
            </tr>
          </thead>
          <tbody>
            {mainRows.map((r, i) => (
              <tr key={i}>
                <RowHead $hot={r.hot}>{r.no}</RowHead>
                {mainCols.slice(4).map((_, n) => <Td key={n} $h={r.h} $bg={r.bg} />)}
                <Td $h={r.h} $bg={r.bg} $num $align="right">{r.price}</Td>
                <Td $h={r.h} $bg={r.bg} $num $strong={r.strong} $align="right">{r.total}</Td>
                <Td $h={r.h} $bg={r.bg} $align="right">{r.file}</Td>
              </tr>
            ))}
          </tbody>
        </Table>
      </GridView>
      <Scroll size={17} />
    </GridRow>
    <AcrossScroll size={60} corner={17} />
  </GridBox>
);

const LowerGrid = () => (
  <GridBox $fill>
    <GridView>
      <Table $width="929px">
        <Cols widths={lowerCols} />
        <thead>
          <tr>
            {lowerCols.map((_, i) => (
              <Th key={i} $hot={i === 1}>{i === 12 ? "是否暂估" : ""}</Th>
            ))}
          </tr>
        </thead>
        <tbody>
          {lowerRows.map((r, i) => (
            <tr key={i}>
              <RowHead $hot={i === 0}>{i + 1}</RowHead>
              {lowerCols.slice(2).map((_, n) => {
                const num = n === 0 || n > 4;
                return (
                  <Td
                    key={n}
                    $bg={i === 0 && n === 0 ? "#d5e7be" : "#ffffc0"}
                    $num={num}
                    $align={num ? "right" : n === 1 ? "center" : "left"}
                  >
                    {r[n]}
                  </Td>
                );
              })}
              <Td $bg="#ffffc0" $align="center">
                {i === 7 && <SquareCheck type="checkbox" $dark aria-label="是否暂估" />}
              </Td>
            </tr>
          ))}
        </tbody>
      </Table>
    </GridView>
    <Scroll size={17} />
  </GridBox>
);

const ChapterTree = () => (
  <TreeBox>
    <GridRow>
      <TreeList $indent={12}>
        {chapters.map(([level, kind, text, no], i) => (
          <TreeRow key={i} $h={16}>
            {Array.from({ length: level }, (_, n) => <Guide key={n} />)}
            {kind === "open" || kind === "closed" ? (
              <Expander>
                <Chevron
                  dir={kind === "open" ? "down" : "right"}
                  size={10}
                  color={kind === "open" ? "#404040" : "#a6a6a6"}
                />
              </Expander>
            ) : (
              <Elbow $last={kind === "last"} />
            )}
            <TreeText $selected={no === "6."}>
              {no && <TreeNo>{no}</TreeNo>}
              {text}
            </TreeText>
          </TreeRow>
        ))}
      </TreeList>
      <Scroll size={206} offset={29} />
    </GridRow>
    <AcrossScroll size={107} corner={17} />
  </TreeBox>
);

const QueryDialog = () => (
  <Dialog role="dialog" aria-label="查询">
    <DialogTitle>
      <AppIcon />
      <span>查询</span>
      <Grow />
      <WindowButtons>
        <WindowButton aria-label="最小化"><Dash color="#c4c4c4" /></WindowButton>
        <WindowButton aria-label="最大化">
          <svg width="10" height="10"><path d="M.5.5h9v9h-9Z" fill="none" stroke="#000" /></svg>
        </WindowButton>
        <WindowButton aria-label="关闭"><CloseX /></WindowButton>
      </WindowButtons>
    </DialogTitle>
    <DialogTabs>
      <DialogTab $first $w={66}>清单指引</DialogTab>
      <DialogTab $w={52}>清单</DialogTab>
      <ActiveDialogTab>定额</ActiveDialogTab>
      <DialogTab $edge $w={58}>人材机</DialogTab>
      <DialogTab $w={82}>补充人材机</DialogTab>
      <DialogActions>
        <FlatButton $w="73px" disabled>插入(I)</FlatButton>
        <FlatButton $w="70px" disabled>替换(R)</FlatButton>
      </DialogActions>
    </DialogTabs>
    <DialogBody>
      <QueryPane>
        <ComboWrap>
          <Combo aria-label="定额库">
            <option>湖北省房屋修缮工程预算定额统一基</option>
          </Combo>
          <Chevron dir="down" width={1} color="#444" />
        </ComboWrap>
        <PageTabs>
          <PageTab $active>章节查询</PageTab>
          <PageTab>条件查询</PageTab>
        </PageTabs>
        <Page>
          <ChapterTree />
          <RadioStrip>
            {["标准", "补充", "全部"].map((t) => (
              <RadioLabel key={t} $gap={8}>
                <Radio type="radio" name="scope" $size={11} defaultChecked={t === "全部"} />
                {t}
              </RadioLabel>
            ))}
          </RadioStrip>
        </Page>
      </QueryPane>
      <GridBox $fill>
        <GridView>
          <Table $width="554px">
            <Cols widths={[23, 62, 268, 55, 65, 81]} />
            <thead>
              <tr>
                {["", "编码", "名称", "单位", "含税单价", "不含税单价"].map((t, i) => (
                  <Th key={i} $hot={i === 1}>{t}</Th>
                ))}
              </tr>
            </thead>
            <tbody>
              {quotaRows.map(([code, name, taxed, net], i) => (
                <tr key={code}>
                  <RowHead $hot={i === 0}>{i + 1}</RowHead>
                  <Td $num $bg={i === 0 ? "#d9eafa" : undefined}>{code}</Td>
                  <Td>分部工程拆除&nbsp; 金属构件拆除&nbsp; {name}</Td>
                  <Td $num>t</Td>
                  <Td $num $align="right">{taxed}</Td>
                  <Td $num $align="right">{net}</Td>
                </tr>
              ))}
            </tbody>
          </Table>
        </GridView>
      </GridBox>
    </DialogBody>
  </Dialog>
);

const Task = () => (
  <TaskBar>
    <StartButton aria-label="开始">
      <Svg>
        <path d="M0 2.300 6.500 1.400v6.100H0ZM7.500 1.200 16 0v7.500H7.500ZM0 8.500h6.500v6.100L0 13.700ZM7.500 8.500H16V16l-8.500-1.200Z" fill="#fff" />
      </Svg>
    </StartButton>
    <SearchBox>
      <svg width="23" height="23" viewBox="0 0 23 23"><circle cx="11.500" cy="11.500" r="9" fill="none" stroke="#fff" strokeWidth="2.500" /></svg>
      <SearchInput placeholder="在这里输入你要搜索的内容" />
      <FiMic size={17} color="#aaa" />
    </SearchBox>
    <TaskButton $w={51}>
      <svg width="22" height="26" viewBox="0 0 22 26">
        <g fill="#e8eaea">
          <path d="M10.500 13C4 13 .5 9 1 5.500 1.500 2 6 1 10 2.500 6.500 6 7.500 10 10.500 13Z" />
          <path d="M11.500 12C8 8 8 4 12 2c3-1.500 6 0 6 3s-5 3-6.500 7Z" />
          <path d="M12.500 12.500c0-4 3-6.500 6-6s3.500 4.500 1 6.500-4.500 1-7-.5Z" />
          <path d="M12 13.500c5 0 9 2.500 9 6.500 0 3.500-4.500 5-8 3.500 3-3 2-7-1-10Z" />
          <path d="M11 14c3 4 3 8-1 10-3 1.500-6 0-6-3s5.500-3 7-7Z" />
          <path d="M10 14c0 3.500-3 6-6 5.500s-4-4-1.500-6 5-1 7.500.5Z" />
        </g>
      </svg>
    </TaskButton>
    <TaskButton $w={51}>
      <svg width="28" height="28" viewBox="0 0 28 28" fill="none" stroke="#ccc" strokeWidth="1.300">
        <path d="M15 6C8 4 1 9 2 16c1 9 14 10 16 3 2-6-6-9-8-4-1 4 4 5 5 2M15 10C10 8 5 11 6 16c1 5 9 6 9 1M12 24c6 1 11-4 8-10" />
        <path d="M15.500 12c2-1 1-9 6.500-9s4.500 8 6 9Z" fill="#f3b31c" stroke="#e09a00" strokeWidth=".6" />
        <circle cx="22" cy="13" r="1.500" fill="#d98e00" stroke="none" />
      </svg>
    </TaskButton>
    <TaskDivider />
    <TaskButton>
      <svg width="22" height="24" viewBox="0 0 22 24">
        <path d="M1 11C2 4 6 1 11.500 1 18 1 21 6 21 11.500V14H7.500c0 4 3.500 5.500 7 5.500 2 0 4-.5 5.500-1.500v4.500c-2 1-4.500 1.500-7 1.500-6.500 0-10-4-10-9 0-4 2.500-6.500 5-8-1 1.500-1.300 2.500-1.500 3.500H15C15 7 13.500 5.500 10.500 5.500 6.500 5.500 3 7.500 1 11Z" fill="#0a78d6" />
      </svg>
    </TaskButton>
    <TaskButton>
      <svg width="22" height="26" viewBox="0 0 22 26">
        <path d="M6 8V5a5 4 0 0 1 10 0v3" fill="none" stroke="#fff" strokeWidth="1.500" />
        <path d="M1 7h20v16L1 25Z" fill="#fff" />
        <path d="M6 11.500l4-.5v4H6ZM11 10.800l5-.6V15h-5ZM6 16h4v4l-4-.5ZM11 16h5v5l-5-.7Z" fill="#010b10" />
      </svg>
    </TaskButton>
    <TaskButton>
      <svg width="22" height="22" viewBox="0 0 22 22">
        <path d="M0 1h8l2 2.500h11V20H0Z" fill="#fbd568" />
        <path d="M0 6h21.500v14H0Z" fill="#ffe9a2" />
        <path d="M4 13h14v9h-4v-5H8v5H4Z" fill="#38b0e8" />
      </svg>
    </TaskButton>
    <TaskButton $open>
      <svg width="24" height="26" viewBox="0 0 24 26" fill="none">
        <circle cx="12" cy="13" r="11" fill="#46b830" />
        <circle cx="12" cy="13" r="9.500" stroke="#8be06c" />
        <path d="M6.500 13.500h11c0-7-10-7-10.500 0 0 7 7 7 10 3" stroke="#fff" strokeWidth="2.800" />
        <path d="M3 20C8 18 16 10 20 3" stroke="#e8ffd8" strokeWidth="1.500" />
      </svg>
    </TaskButton>
    <TaskButton $open>
      <svg width="24" height="26" viewBox="0 0 24 26" fill="none">
        <rect width="24" height="26" rx="5" fill="#0c93f5" />
        <path d="M16 7.500C15.500 5 12 5 12 8v10c0 3-4.500 3-5 0v-1M4.500 13H16c5 0 5 6 .5 6-2 0-2.500-1-2.500-2.500" stroke="#fff" strokeWidth="2" strokeLinecap="round" />
      </svg>
    </TaskButton>
    <TaskButton $open $active><AppIcon size={24} /></TaskButton>
    <Grow />
    <Clock>72%<br />CPU使用</Clock>
    <TaskButton $w={24}><Chevron dir="up" size={13} color="#fff" width={1} /></TaskButton>
    <TaskButton $w={24}>
      <Svg stroke="#fff"><path d="M5.500 5.500h9v6h-9Z" /><path d="M7 7h6v3H7Z" fill="#fff" /><path d="M1 2v3M4 2v3M.5 5h4v2.500h-4ZM2.500 8v3h2" /></Svg>
    </TaskButton>
    <TaskButton $w={24}>
      <Svg stroke="#ddd"><path d="M2 14C2 7 7 2 14 2M5 14c0-5 4-9 9-9M8 14c0-3 3-6 6-6" stroke="#999" /><path d="M11 14c0-1.500 1.500-3 3-3v3Z" fill="#fff" /></Svg>
    </TaskButton>
    <TaskButton $w={24}>
      <Svg stroke="#fff"><path d="M1 6h2.500L7 2.500v11L3.500 10H1ZM9.500 6c1 1 1 3 0 4M11.500 4c2 2 2 6 0 8" /><path d="M13.500 2c3 3 3 9 0 12" stroke="#888" /></Svg>
    </TaskButton>
    <TaskButton $w={24}>中</TaskButton>
    <TaskButton $w={34}><SogouIcon /></TaskButton>
    <Clock>9:38<br />2017/8/18</Clock>
    <TaskButton $w={42}>
      <svg width="26" height="26" viewBox="0 0 26 26">
        <path d="M2 3h16v12h-8l-4 4v-4H2Z" fill="#fff" />
        <path d="M5 6.500h10M5 9h10M5 11.500h7" stroke="#010b10" />
        <circle cx="17.500" cy="17.500" r="7.500" fill="#333" stroke="#888" />
        <text x="17.500" y="22" fill="#fff" fontSize="12" fontWeight="700" textAnchor="middle">2</text>
      </svg>
    </TaskButton>
    <TaskEdge />
  </TaskBar>
);

const App = () => (
  <Screen>
    <GlobalStyle />
    <TitleBar>
      <AppIcon />
      <TitleText>
        广联达计价软件 GBQ4.0 - [招标管理 - 单位工程:恒安孝感公司2#仓库改造工程&gt;恒安孝感公司2#仓库改造工程&gt;恒安孝感公司2#仓库改造工程-土建部分 - C:\Users\Administrator.PC-20141127NRHM\Desktop\恒安孝感公...
      </TitleText>
      <WindowButtons>
        <WindowButton aria-label="最小化"><Dash color="#999" /></WindowButton>
        <WindowButton aria-label="还原"><Restore color="#999" /></WindowButton>
        <WindowButton aria-label="关闭"><CloseX color="#999" /></WindowButton>
      </WindowButtons>
    </TitleBar>
    <MenuBar>
      <AppIcon />
      {menus.map((m) => <MenuItem key={m}>{m}</MenuItem>)}
      <MenuItem><HelpIcon />帮助(H)</MenuItem>
      <MenuItem><PayIcon />计量支付</MenuItem>
      <Grow />
      <WindowButtons>
        <WindowButton $w={18} aria-label="最小化">
          <svg width="8" height="10"><path d="M1 8h6" stroke="#000" strokeWidth="2" /></svg>
        </WindowButton>
        <WindowButton $w={18} aria-label="还原"><Restore color="#000" width={1.4} size={9} /></WindowButton>
        <WindowButton $w={20} aria-label="关闭"><CloseX size={8} width={2} /></WindowButton>
      </WindowButtons>
    </MenuBar>
    <TopTools />
    <Body>
      <SideTabs>
        <Notch lower />
        {sideTabs.map((t, i) => [
          <SideTab key={t} $active={i === 1}><SideLabel>{t}</SideLabel></SideTab>,
          <Notch key={`${t}-edge`} lower={i === 0} heavy={i === 1} />,
        ])}
        <SideArrows>
          <SideArrow aria-label="上一个"><Arrow4 dir="up" size={9} fill="#999" stroke="#999" /></SideArrow>
          <SideArrow aria-label="下一个"><Arrow4 dir="down" size={9} fill="#000" stroke="#000" /></SideArrow>
        </SideArrows>
      </SideTabs>
      <LeftPanel>
        <LeftHeader>
          分部分项
          <WindowButton $w={34} aria-label="关闭"><CloseX width={2} /></WindowButton>
        </LeftHeader>
        <TreeBox>
          <TreeList>
            <TreeRow $h={14}><TreeRoot>整个项目</TreeRoot></TreeRow>
            {projectTree.map((t, i) => (
              <TreeRow key={t} $h={14}>
                <Elbow $offset={12} $last={i === projectTree.length - 1} />
                <TreeText>{t}</TreeText>
              </TreeRow>
            ))}
          </TreeList>
          <AcrossScroll size={84} />
        </TreeBox>
        <BottomTabs>
          <BottomTab front>收藏夹</BottomTab>
          <BottomTab>分部树</BottomTab>
        </BottomTabs>
      </LeftPanel>
      <Splitter><SplitHandle /></Splitter>
      <Main>
        <ItemTools />
        <MainGrid />
        <DetailTabs><SunkenTab>工料机显示</SunkenTab></DetailTabs>
        <Lower>
          <LowerGrid />
          <ActionPanel>
            <ActionGrid>
              <FlatButton disabled>插入</FlatButton>
              <FlatButton disabled>添加</FlatButton>
              <FlatButton disabled>删除</FlatButton>
              <FlatButton disabled>查询</FlatButton>
              <FlatButton disabled $wide>补充</FlatButton>
              <FlatButton disabled $wide>材料价格查询</FlatButton>
            </ActionGrid>
            <FilterBox>
              <FilterLegend>筛选条件</FilterLegend>
              <FilterRow>
                <RadioLabel><Radio type="radio" name="filter" $size={14} />人工</RadioLabel>
                <RadioLabel><Radio type="radio" name="filter" $size={14} />机械</RadioLabel>
              </FilterRow>
            </FilterBox>
          </ActionPanel>
        </Lower>
      </Main>
    </Body>
    <StatusBar>
      <StatusCell>清单库：工程量清单项目计量规范(2013-湖北)</StatusCell>
      <StatusCell>定额库：湖北省房屋建筑与装饰工程消耗量定额及基价表(2013)</StatusCell>
      <StatusCell>定额专业：建筑工程</StatusCell>
      <StatusCell>当前分部：整个项目</StatusCell>
    </StatusBar>
    <Task />
    <ImeBar>
      <ImeLogo><SogouIcon size={28} /></ImeLogo>
      <ImeButton>中</ImeButton>
      <ImeButton>°,</ImeButton>
      <ImeButton><FaMicrophone size={15} /></ImeButton>
      <ImeButton><FaKeyboard size={16} /></ImeButton>
      <ImeButton $pale><FaUserAlt size={14} /></ImeButton>
      <ImeButton><FaTshirt size={15} /></ImeButton>
      <ImeButton><FaWrench size={14} /></ImeButton>
    </ImeBar>
    <QueryDialog />
    <Mark $x={279} $y={317} width="134" height="48">
      <ellipse cx="67" cy="24" rx="63" ry="20" fill="none" stroke="#f00" strokeWidth="7" />
    </Mark>
    <Mark $x={441} $y={318} width="338" height="40">
      <ellipse cx="169" cy="20" rx="165" ry="16" fill="none" stroke="#f00" strokeWidth="7" />
    </Mark>
    <SpeedBall>72</SpeedBall>
  </Screen>
);

export default App;
